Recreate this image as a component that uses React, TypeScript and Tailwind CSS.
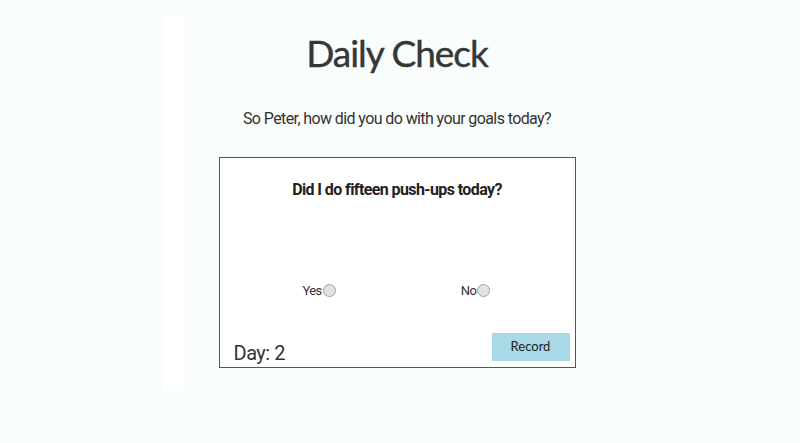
import React, { useState } from 'react';

function App() {
  const [answer, setAnswer] = useState<'yes' | 'no' | ''>('');
  const day = 2;

  return (
    <div className="min-h-[443px] w-full bg-[#f9fdfb] flex">
      <div className="w-[165px] shrink-0" />
      <div className="w-[20px] h-[378px] mt-[15px] bg-white shrink-0" />
      <div className="w-[424px] shrink-0 flex flex-col items-center">
        <h1 className="mt-[29px] text-[37px] leading-[48px] text-[#363636] font-['Lato',sans-serif] tracking-[-1px] [-webkit-text-stroke:0.4px_#363636]">
          Daily Check
        </h1>
        <p className="mt-[32px] text-[16px] leading-[20px] text-[#333] font-['Roboto',sans-serif] tracking-[-0.6px]">
          So Peter, how did you do with your goals today?
        </p>
        <div className="mt-[28px] w-[357px] h-[211px] bg-white border-[1.5px] border-[#555] flex flex-col font-['Roboto',sans-serif]">
          <h2 className="mt-[22px] text-center text-[16px] leading-[20px] font-bold text-[#222] tracking-[-0.6px]">
            Did I do fifteen push-ups today?
          </h2>
          <div className="mt-[81px] flex text-[13px] text-[#333] tracking-[-0.6px]">
            <label className="ml-[83px] flex items-center cursor-pointer">
              Yes
              <span
                onClick={() => setAnswer('yes')}
                className="ml-[1px] w-[13px] h-[13px] rounded-full border border-[#a0a0a0] bg-[#e2e2e2]"
              />
            </label>
            <label className="ml-[125px] flex items-center cursor-pointer">
              No
              <span
                onClick={() => setAnswer('no')}
                className="ml-[1px] w-[13px] h-[13px] rounded-full border border-[#a0a0a0] bg-[#e2e2e2]"
              />
            </label>
          </div>
          <div className="mt-auto mb-[3px] flex items-end justify-between pl-[14px] pr-[5px]">
            <span className="text-[20px] leading-[22px] text-[#333] tracking-[-0.5px]">Day: {day}</span>
            <button className="mb-[3px] w-[78px] h-[28px] bg-[#a9d8e6] text-[13px] text-[#222] font-['Lato',sans-serif]">
              Record
            </button>
          </div>
        </div>
        {answer && <span className="sr-only">{answer}</span>}
      </div>
    </div>
  );
}

export default App;
